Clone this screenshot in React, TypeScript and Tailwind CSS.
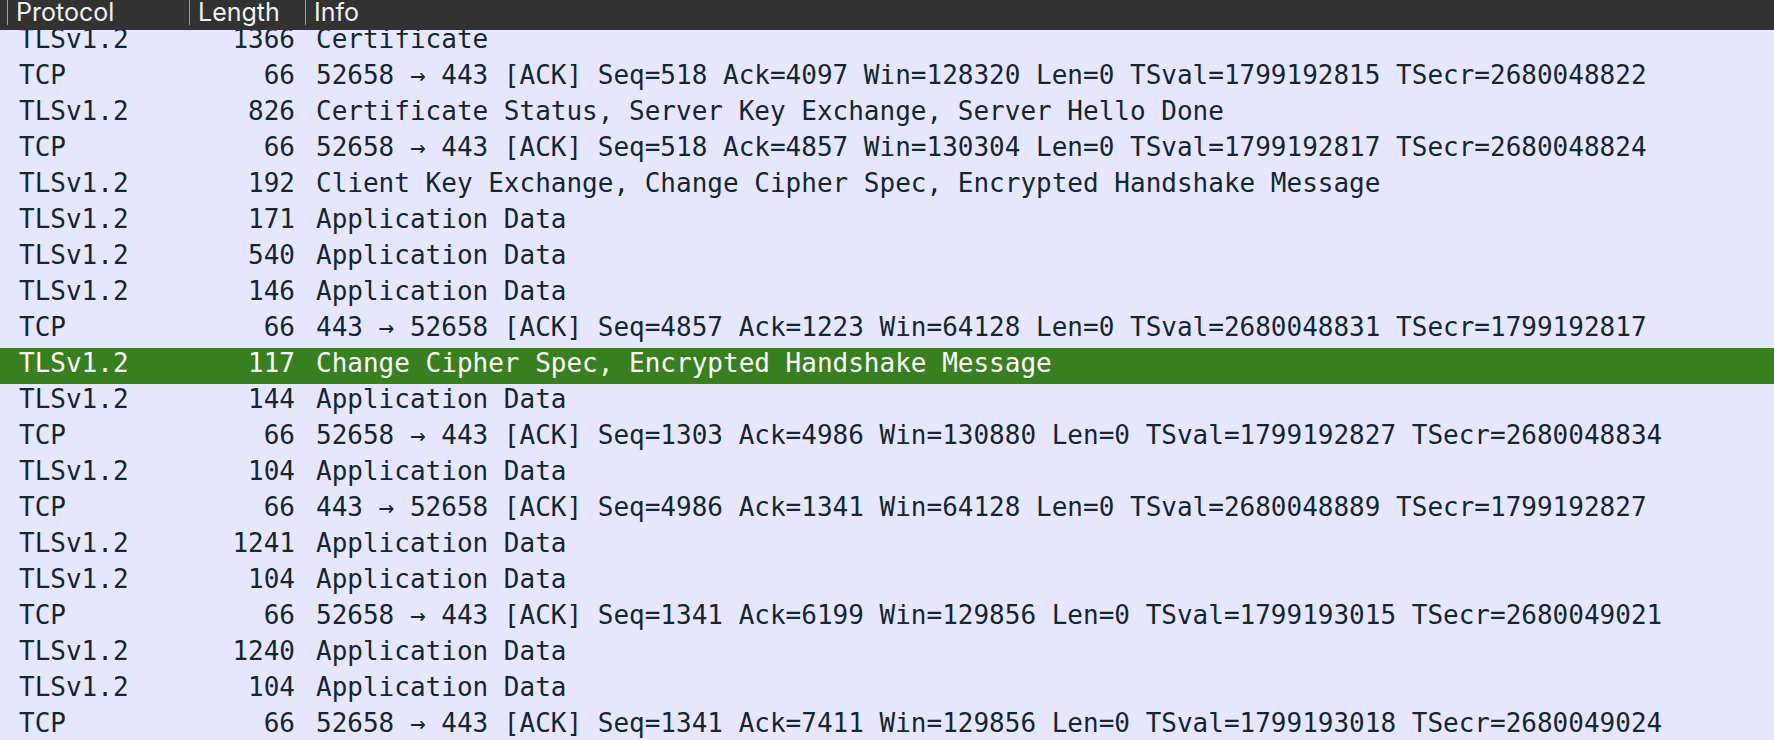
import React from "react";

type Packet = {
  proto: string;
  len: number;
  info: string;
  selected?: boolean;
};

const packets: Packet[] = [
  { proto: "TLSv1.2", len: 1366, info: "Certificate" },
  { proto: "TCP", len: 66, info: "52658 → 443 [ACK] Seq=518 Ack=4097 Win=128320 Len=0 TSval=1799192815 TSecr=2680048822" },
  { proto: "TLSv1.2", len: 826, info: "Certificate Status, Server Key Exchange, Server Hello Done" },
  { proto: "TCP", len: 66, info: "52658 → 443 [ACK] Seq=518 Ack=4857 Win=130304 Len=0 TSval=1799192817 TSecr=2680048824" },
  { proto: "TLSv1.2", len: 192, info: "Client Key Exchange, Change Cipher Spec, Encrypted Handshake Message" },
  { proto: "TLSv1.2", len: 171, info: "Application Data" },
  { proto: "TLSv1.2", len: 540, info: "Application Data" },
  { proto: "TLSv1.2", len: 146, info: "Application Data" },
  { proto: "TCP", len: 66, info: "443 → 52658 [ACK] Seq=4857 Ack=1223 Win=64128 Len=0 TSval=2680048831 TSecr=1799192817" },
  { proto: "TLSv1.2", len: 117, info: "Change Cipher Spec, Encrypted Handshake Message", selected: true },
  { proto: "TLSv1.2", len: 144, info: "Application Data" },
  { proto: "TCP", len: 66, info: "52658 → 443 [ACK] Seq=1303 Ack=4986 Win=130880 Len=0 TSval=1799192827 TSecr=2680048834" },
  { proto: "TLSv1.2", len: 104, info: "Application Data" },
  { proto: "TCP", len: 66, info: "443 → 52658 [ACK] Seq=4986 Ack=1341 Win=64128 Len=0 TSval=2680048889 TSecr=1799192827" },
  { proto: "TLSv1.2", len: 1241, info: "Application Data" },
  { proto: "TLSv1.2", len: 104, info: "Application Data" },
  { proto: "TCP", len: 66, info: "52658 → 443 [ACK] Seq=1341 Ack=6199 Win=129856 Len=0 TSval=1799193015 TSecr=2680049021" },
  { proto: "TLSv1.2", len: 1240, info: "Application Data" },
  { proto: "TLSv1.2", len: 104, info: "Application Data" },
  { proto: "TCP", len: 66, info: "52658 → 443 [ACK] Seq=1341 Ack=7411 Win=129856 Len=0 TSval=1799193018 TSecr=2680049024" },
];

const HeaderCell = ({ label, className }: { label: string; className: string }) => (
  <div className={`flex items-start h-full ${className}`}>
    <div className="w-px h-[25px] bg-[#9c9c9c]" />
    <span className="pl-[8px] leading-[25px]">{label}</span>
  </div>
);

const App = () => {
  return (
    <div className="w-full h-[740px] overflow-hidden bg-[#e7e6ff]">
      {/* column header */}
      <div className="relative z-10 flex h-[30px] bg-[#323232] pl-[7px] text-[25px] text-[#f0f0f0] font-['Inter',sans-serif]">
        <HeaderCell label="Protocol" className="w-[182px]" />
        <HeaderCell label="Length" className="w-[116px]" />
        <HeaderCell label="Info" className="flex-1" />
      </div>

      {/* packet list */}
      <div className="-mt-[6px] font-['DejaVu_Sans_Mono',monospace] text-[26px]">
        {packets.map((p, i) => (
          <div
            key={i}
            className={`flex h-[36px] pl-[19px] pb-[6px] leading-[30px] whitespace-pre ${
              p.selected ? "bg-[#38801f] text-white" : "text-[#12272e]"
            }`}
          >
            <span className="w-[150px]">{p.proto}</span>
            <span className="w-[126px] text-right">{p.len}</span>
            <span className="ml-[21px]">{p.info}</span>
          </div>
        ))}
      </div>
    </div>
  );
};

export default App;
